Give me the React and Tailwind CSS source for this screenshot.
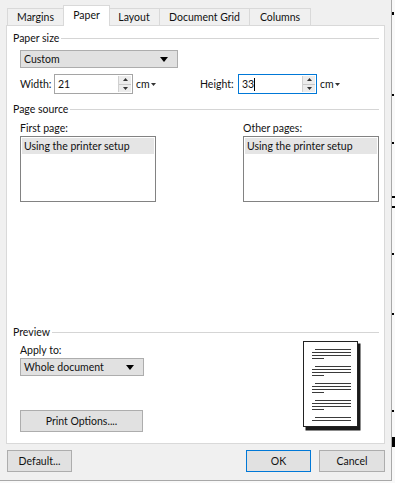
import React from 'react';

function GroupHeader({ title }) {
  return (
    <div className="flex items-center h-[16px]">
      <span>{title}</span>
      <div className="flex-1 h-px bg-[#d5d5d5] ml-[2px] mt-px" />
    </div>
  );
}

function Caret() {
  return (
    <svg width="8" height="5" viewBox="0 0 8 5" className="shrink-0">
      <path d="M0 0h8L4 5z" fill="#000" />
    </svg>
  );
}

function Dropdown({ value, width }) {
  return (
    <div className={`flex items-center justify-between h-[18px] ${width} ml-[7px] bg-[#e1e1e1] border border-[#adadad] pl-[3px] pr-[9px]`}>
      <span>{value}</span>
      <Caret />
    </div>
  );
}

function Spin() {
  return (
    <div className="flex flex-col w-[13px] h-full border-l border-[#d0d0d0]">
      <div className="flex-1 flex items-center justify-center bg-[#ececec] border-b border-[#c8c8c8]">
        <svg width="5" height="3" viewBox="0 0 5 3"><path d="M0 3h5L2.5 0z" fill="#333" /></svg>
      </div>
      <div className="flex-1 flex items-center justify-center bg-[#ececec]">
        <svg width="5" height="3" viewBox="0 0 5 3"><path d="M0 0h5L2.5 3z" fill="#333" /></svg>
      </div>
    </div>
  );
}

function NumberBox({ value, width, focused }) {
  return (
    <div className={`flex items-stretch h-[20px] ${width} bg-white border ${focused ? 'border-[#0078d7]' : 'border-[#a5a5a5]'} p-px`}>
      <div className="flex-1 flex items-center pl-[2px]">
        <span>{value}</span>
        {focused && <span className="w-px h-[13px] bg-black" />}
      </div>
      <Spin />
    </div>
  );
}

function Unit() {
  return (
    <div className="flex items-center ml-[3px] gap-[1px]">
      <span>cm</span>
      <svg width="5" height="3" viewBox="0 0 5 3"><path d="M0 0h5L2.5 3z" fill="#333" /></svg>
    </div>
  );
}

function ListBox({ label }) {
  return (
    <div className="flex flex-col w-[136px]">
      <div className="h-[16px] leading-[16px]">{label}</div>
      <div className="h-[66px] border border-[#828282] bg-white p-px">
        <div className="h-[16px] bg-[#e5e5e5] pl-[2px] leading-[16px]">Using the printer setup</div>
      </div>
    </div>
  );
}

function Btn({ children, className }) {
  return (
    <div className={`flex items-center justify-center h-[22px] bg-[#e1e1e1] border ${className}`}>
      {children}
    </div>
  );
}

function PagePreview() {
  const groups = [350, 367, 384, 401];
  return (
    <svg width="58" height="90" viewBox="0 0 58 90" className="mt-[1px] mr-[18px]">
      <rect x="2.5" y="2.5" width="55" height="87" fill="#1a1a1a" />
      <rect x="0.5" y="0.5" width="54" height="85" fill="#fff" stroke="#222" />
      {groups.map((g) => {
        const y = g - 342;
        return (
          <g key={g} stroke="#3a3a3a" strokeWidth="1">
            <path d={`M12 ${y + 0.5}h36`} />
            <path d={`M9 ${y + 3.5}h39`} />
            <path d={`M9 ${y + 6.5}h39`} />
            <path d={`M9 ${y + 9.5}h12`} />
          </g>
        );
      })}
      <g stroke="#3a3a3a" strokeWidth="1">
        <path d="M12 76.5h36" />
        <path d="M9 79.5h39" />
      </g>
    </svg>
  );
}

export default function App() {
  const tabs = [
    { name: 'Margins', w: 'w-[57px]' },
    { name: 'Paper', w: 'w-[47px]', active: true },
    { name: 'Layout', w: 'w-[52px]' },
    { name: 'Document Grid', w: 'w-[91px]' },
    { name: 'Columns', w: 'w-[62px]' },
  ];

  return (
    <div className="relative w-[395px] h-[483px] bg-[#f9f9f9] overflow-hidden font-['Lato',sans-serif] text-[10.5px] leading-[16px] text-[#111]">
      <div className="w-[392px] h-[481px] bg-[#f0f0f0] border-r border-b border-[#a8a8a8] flex flex-col">
        {/* tabs */}
        <div className="flex items-end h-[25px] pl-[7px]">
          {tabs.map((t, i) => (
            <div
              key={t.name}
              className={`${t.w} flex items-center justify-center border-t border-l border-r border-[#d9d9d9] ${i > 0 ? '-ml-px' : ''} ${
                t.active ? 'relative z-10 h-[21px] -mb-px bg-white pb-[3px] -mx-[1px]' : 'h-[17px] bg-[#f0f0f0]'
              }`}
            >
              {t.name}
            </div>
          ))}
        </div>

        {/* panel */}
        <div className="ml-[6px] w-[379px] h-[419px] border border-[#d9d9d9] bg-white pl-[6px] pr-[5px] flex flex-col">
          <div className="mt-[4px]">
            <GroupHeader title="Paper size" />
          </div>
          <div className="mt-[4px]">
            <Dropdown value="Custom" width="w-[158px]" />
          </div>
          <div className="flex items-center mt-[6px] ml-[7px]">
            <div className="flex items-center w-[180px]">
              <span className="w-[34px]">Width:</span>
              <NumberBox value="21" width="w-[79px]" />
              <Unit />
            </div>
            <span className="w-[38px]">Height:</span>
            <NumberBox value="33" width="w-[79px]" focused />
            <Unit />
          </div>

          <div className="mt-[7px]">
            <GroupHeader title="Page source" />
          </div>
          <div className="flex justify-between mt-[3px] ml-[7px]">
            <ListBox label="First page:" />
            <ListBox label="Other pages:" />
          </div>

          <div className="mt-auto">
            <GroupHeader title="Preview" />
          </div>
          <div className="flex justify-between items-start pb-[11px]">
            <div className="flex flex-col ml-[7px] mt-[2px]">
              <span>Apply to:</span>
              <Dropdown value="Whole document" width="w-[124px] !ml-0" />
              <Btn className="w-[123px] mt-[34px] border-[#adadad]">Print Options....</Btn>
            </div>
            <PagePreview />
          </div>
        </div>

        {/* buttons */}
        <div className="flex items-center mt-[6px] pl-[7px]">
          <Btn className="w-[65px] border-[#adadad]">Default...</Btn>
          <Btn className="w-[65px] ml-auto border-[#0078d7]">OK</Btn>
          <Btn className="w-[66px] ml-[8px] mr-[6px] border-[#adadad]">Cancel</Btn>
        </div>
      </div>

      {/* document behind the dialog */}
      <div className="absolute left-[392px] top-[12px] w-[2px] h-[3px] bg-black" />
      <div className="absolute left-[392px] top-[94px] w-[2px] h-[2px] bg-black" />
      <div className="absolute left-[392px] top-[142px] w-[2px] h-[2px] bg-black" />
      <div className="absolute left-[392px] top-[196px] w-[3px] h-[12px] border-y-2 border-black" />
      <div className="absolute left-[392px] top-[253px] w-[2px] h-[2px] bg-black" />
      <div className="absolute left-[392px] top-[313px] w-[2px] h-[2px] bg-black" />
      <div className="absolute left-[392px] top-[410px] w-[2px] h-[2px] bg-black" />
      <div className="absolute left-[392px] top-[437px] w-[3px] h-[10px] bg-black" />
    </div>
  );
}
